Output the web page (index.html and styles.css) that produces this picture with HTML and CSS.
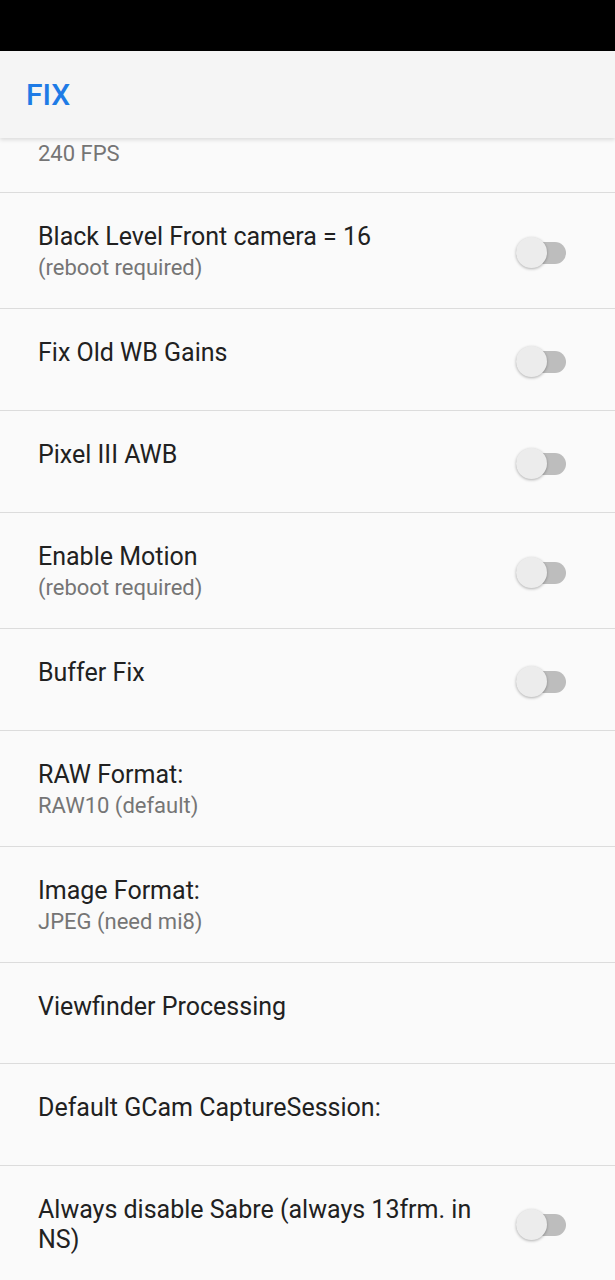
FILE: index.html
```html
<!DOCTYPE html>
<html lang="en">
<head>
    <meta charset="UTF-8">
    <meta name="viewport" content="width=device-width, initial-scale=1.0">
    <title>FIX</title>
    <link rel="stylesheet" href="styles.css">
</head>
<body>

    <div class="status-bar"></div>

    <header class="app-bar">
        <h1>FIX</h1>
    </header>

    <div class="pref-list">
        <div class="pref partial">
            <div class="pref-text">
                <p class="summary">240 FPS</p>
            </div>
        </div>

        <div class="pref">
            <div class="pref-text">
                <p class="title">Black Level Front camera = 16</p>
                <p class="summary">(reboot required)</p>
            </div>
            <span class="switch"></span>
        </div>

        <div class="pref">
            <div class="pref-text">
                <p class="title">Fix Old WB Gains</p>
            </div>
            <span class="switch"></span>
        </div>

        <div class="pref">
            <div class="pref-text">
                <p class="title">Pixel III AWB</p>
            </div>
            <span class="switch"></span>
        </div>

        <div class="pref">
            <div class="pref-text">
                <p class="title">Enable Motion</p>
                <p class="summary">(reboot required)</p>
            </div>
            <span class="switch"></span>
        </div>

        <div class="pref">
            <div class="pref-text">
                <p class="title">Buffer Fix</p>
            </div>
            <span class="switch"></span>
        </div>

        <div class="pref">
            <div class="pref-text">
                <p class="title">RAW Format:</p>
                <p class="summary">RAW10 (default)</p>
            </div>
        </div>

        <div class="pref">
            <div class="pref-text">
                <p class="title">Image Format:</p>
                <p class="summary">JPEG (need mi8)</p>
            </div>
        </div>

        <div class="pref short">
            <div class="pref-text">
                <p class="title">Viewfinder Processing</p>
            </div>
        </div>

        <div class="pref">
            <div class="pref-text">
                <p class="title">Default GCam CaptureSession:</p>
            </div>
        </div>

        <div class="pref">
            <div class="pref-text">
                <p class="title">Always disable Sabre (always 13frm. in NS)</p>
            </div>
            <span class="switch"></span>
        </div>
    </div>

</body>
</html>
```

FILE: styles.css
```css
body {
    margin: 0;
    font-family: Roboto, "Liberation Sans", sans-serif;
    background-color: #fafafa;
}

.status-bar {
    height: 51px;
    background-color: #000;
}

.app-bar {
    position: relative;
    z-index: 2;
    height: 87px;
    display: flex;
    align-items: center;
    padding-left: 26px;
    background-color: #f5f5f5;
    box-shadow: 0 2px 4px rgba(0, 0, 0, 0.12);
}

.app-bar h1 {
    margin: 0;
    font-size: 30px;
    font-weight: 500;
    color: #1e7be6;
}

.pref {
    display: flex;
    align-items: center;
    box-sizing: border-box;
    min-height: 102px;
    padding: 29px 49px 25px 38px;
    border-bottom: 1px solid #dcdcdc;
}

.pref.short {
    min-height: 101px;
}

.pref.partial {
    min-height: 0;
    padding-top: 0;
    padding-bottom: 23px;
}

.pref-text {
    flex: 1;
    align-self: flex-start;
}

.title {
    margin: 0;
    font-size: 25px;
    line-height: 30px;
    color: #212121;
}

.summary {
    margin: 0;
    font-size: 22px;
    line-height: 31px;
    color: #757575;
}

.switch {
    position: relative;
    flex: none;
    width: 50px;
    height: 22px;
    margin-left: 20px;
    border-radius: 11px;
    background-color: #bdbdbd;
}

.switch::after {
    content: "";
    position: absolute;
    left: 0;
    top: -5px;
    width: 31px;
    height: 31px;
    border-radius: 50%;
    background-color: #ececec;
    box-shadow: 0 1px 3px rgba(0, 0, 0, 0.3);
}
```
